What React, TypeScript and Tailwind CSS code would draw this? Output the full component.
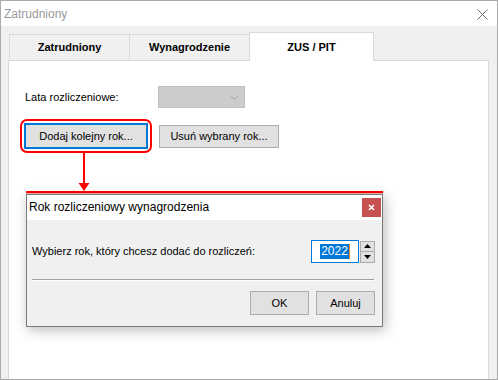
import React from "react";

function SpinArrow({up}: {up: boolean}) {
    return (
        <svg width="7" height="4" viewBox="0 0 7 4">
            {up ? <polygon points="0,4 7,4 3.5,0" fill="#000"/> : <polygon points="0,0 7,0 3.5,4" fill="#000"/>}
        </svg>
    );
}

export default function App() {
    return (
        <div className="relative w-[498px] h-[380px] overflow-hidden border border-[#aaaaaa] bg-[#f0f0f0] font-['Liberation_Sans',Arial,sans-serif] text-[11px] text-black">
            {/* window title */}
            <div className="h-[25px] bg-white flex items-center justify-between pl-[3px] pr-[9px]">
                <span className="text-[12px] text-[#999999]">Zatrudniony</span>
                <svg width="11" height="11" viewBox="0 0 11 11" className="mt-px">
                    <path d="M0.5 0.5 L10.5 10.5 M10.5 0.5 L0.5 10.5" stroke="#666" strokeWidth="1"/>
                </svg>
            </div>

            <div className="pt-[6px] pl-[7px] pr-[8px] flex flex-col h-[354px]">
                {/* tabs */}
                <div className="flex items-end h-[28px] pl-px relative z-10">
                    <div className="w-[121px] h-[26px] border border-b-0 border-[#d9d9d9] flex items-center justify-center font-bold">
                        Zatrudniony
                    </div>
                    <div className="w-[121px] h-[26px] -ml-px border border-b-0 border-[#d9d9d9] flex items-center justify-center font-bold">
                        Wynagrodzenie
                    </div>
                    <div className="w-[125px] h-[29px] -ml-px -mb-px bg-white border border-b-0 border-[#d9d9d9] flex items-center justify-center font-bold">
                        ZUS / PIT
                    </div>
                </div>

                {/* panel */}
                <div className="flex-1 bg-white border border-[#d9d9d9] pt-[25px]">
                    <div className="flex items-center">
                        <span className="w-[149px] pl-[16px]">Lata rozliczeniowe:</span>
                        <div className="w-[87px] h-[22px] bg-[#cccccc] border border-[#bfbfbf] flex items-center justify-end pr-[5px]">
                            <svg width="9" height="5" viewBox="0 0 9 5">
                                <path d="M0.5 0.5 L4.5 4.5 L8.5 0.5" stroke="#a8a8a8" fill="none"/>
                            </svg>
                        </div>
                    </div>

                    <div className="flex items-center mt-[11px] ml-[11px]">
                        <div className="p-[2px] border-2 border-[#ff0000] rounded-[7px]">
                            <button className="w-[124px] h-[26px] bg-[#e1e1e1] border-2 border-[#0078d7] flex items-center justify-center">
                                Dodaj kolejny rok...
                            </button>
                        </div>
                        <button className="ml-[7px] w-[120px] h-[23px] bg-[#e1e1e1] border border-[#adadad] flex items-center justify-center">
                            Usuń wybrany rok...
                        </button>
                    </div>
                </div>
            </div>

            {/* annotation arrow */}
            <svg className="absolute left-[77px] top-[152px]" width="12" height="40" viewBox="0 0 12 40">
                <rect x="5" y="0" width="2" height="32" fill="#ff0000"/>
                <polygon points="0.5,30 11.5,30 6,38" fill="#ff0000"/>
            </svg>
            <div className="absolute left-[25px] top-[190px] w-[357px] h-[2px] bg-[#ff0000] shadow-[0_1px_1px_rgba(255,0,0,0.35)]"/>

            {/* dialog */}
            <div className="absolute left-[25px] top-[193px] w-[357px] h-[133px] border border-[#7a7a7a] bg-[#f0f0f0] shadow-[2px_3px_12px_rgba(0,0,0,0.28)] flex flex-col">
                <div className="h-[25px] bg-white flex items-start justify-between pl-[2px] pr-px">
                    <span className="text-[12px] leading-[25px]">Rok rozliczeniowy wynagrodzenia</span>
                    <div className="mt-[3px] w-[19px] h-[19px] bg-[#c75050] flex items-center justify-center">
                        <svg width="7" height="7" viewBox="0 0 7 7">
                            <path d="M1 1 L6 6 M6 1 L1 6" stroke="#fff" strokeWidth="1.6"/>
                        </svg>
                    </div>
                </div>

                <div className="flex-1 flex flex-col pl-[5px] pr-[7px]">
                    <div className="flex items-center justify-between mt-[20px]">
                        <span>Wybierz rok, który chcesz dodać do rozliczeń:</span>
                        <div className="flex items-center gap-px">
                            <div className="w-[48px] h-[23px] bg-white border border-[#0078d7] flex items-center justify-center">
                                <span className="bg-[#0078d7] text-white text-[12px] leading-[15px] px-px border-r border-[#f08020]">2022</span>
                            </div>
                            <div className="flex flex-col w-[15px] h-[22px]">
                                <div className="h-[11px] bg-[#e1e1e1] border border-[#adadad] flex items-center justify-center">
                                    <SpinArrow up={true}/>
                                </div>
                                <div className="h-[11px] bg-[#e1e1e1] border border-[#adadad] border-t-0 flex items-center justify-center">
                                    <SpinArrow up={false}/>
                                </div>
                            </div>
                        </div>
                    </div>

                    <div className="mt-[16px] mr-px h-[2px] border-t border-[#a0a0a0] border-b border-b-white"/>

                    <div className="flex justify-end gap-[7px] mt-[10px]">
                        <button className="w-[59px] h-[24px] bg-[#e1e1e1] border border-[#adadad] flex items-center justify-center">
                            OK
                        </button>
                        <button className="w-[59px] h-[24px] bg-[#e1e1e1] border border-[#adadad] flex items-center justify-center">
                            Anuluj
                        </button>
                    </div>
                </div>
            </div>
        </div>
    );
}
